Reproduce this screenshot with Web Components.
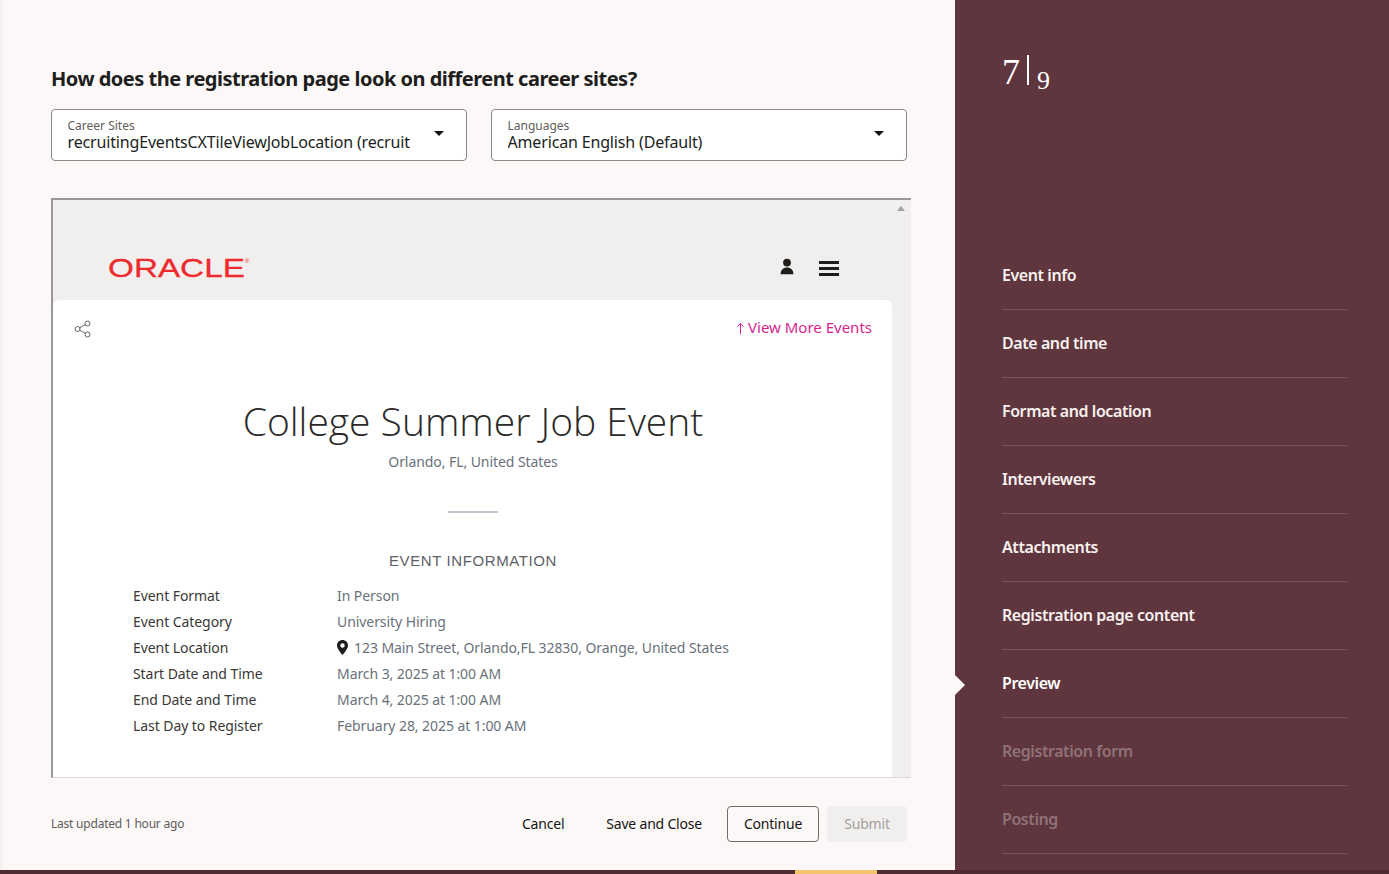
<!DOCTYPE html>
<html lang="en">
<head>
<meta charset="utf-8">
<title>Preview</title>
<style>
    html, body { margin: 0; height: 100%; }
    body { font-family: "Noto Sans", sans-serif; overflow: hidden; background: #4f2c33; }
</style>
</head>
<body>
<wizard-page>
    <select-field slot="selects" label="Career Sites" value="recruitingEventsCXTileViewJobLocation (recruit"></select-field>
    <select-field slot="selects" label="Languages" value="American English (Default)"></select-field>

    <site-preview slot="preview">
        <info-row label="Event Format" value="In Person"></info-row>
        <info-row label="Event Category" value="University Hiring"></info-row>
        <info-row label="Event Location" value="123 Main Street, Orlando,FL 32830, Orange, United States" pin></info-row>
        <info-row label="Start Date and Time" value="March 3, 2025 at 1:00 AM"></info-row>
        <info-row label="End Date and Time" value="March 4, 2025 at 1:00 AM"></info-row>
        <info-row label="Last Day to Register" value="February 28, 2025 at 1:00 AM"></info-row>
    </site-preview>

    <wizard-footer slot="footer"></wizard-footer>

    <wizard-step slot="steps">Event info</wizard-step>
    <wizard-step slot="steps">Date and time</wizard-step>
    <wizard-step slot="steps">Format and location</wizard-step>
    <wizard-step slot="steps">Interviewers</wizard-step>
    <wizard-step slot="steps">Attachments</wizard-step>
    <wizard-step slot="steps">Registration page content</wizard-step>
    <wizard-step slot="steps" current>Preview</wizard-step>
    <wizard-step slot="steps" disabled>Registration form</wizard-step>
    <wizard-step slot="steps" disabled>Posting</wizard-step>
</wizard-page>

<script>
class WizardPage extends HTMLElement {
    constructor() {
        super();
        this.attachShadow({ mode: 'open' });
        this.shadowRoot.innerHTML = `
        <style>
            :host {
                display: block;
                height: 874px;
                position: relative;
                overflow: hidden;
            }
            .main {
                display: flex;
                height: 870px;
            }
            .content {
                box-sizing: border-box;
                width: 955px;
                padding: 0 48px 0 48px;
                background: #fcf8f7;
                border-left: 3px solid #f5f3f1;
                display: flex;
                flex-direction: column;
            }
            h1 {
                margin: 64px 0 0;
                font-size: 20px;
                line-height: 29px;
                font-weight: 700;
                letter-spacing: -.5px;
                color: #201e1c;
                white-space: nowrap;
            }
            .selects {
                display: flex;
                gap: 24px;
                margin-top: 16px;
            }
            .preview {
                margin: 37px -4px 0 0;
            }
            .side {
                flex: 1;
                background: #5f353e;
                color: #fff;
                padding: 0 42px 0 47px;
            }
            .count {
                display: flex;
                align-items: flex-start;
                height: 30px;
                margin-top: 54px;
                font-family: "Liberation Serif", serif;
                color: #fff;
            }
            .count b {
                font-weight: 400;
                font-size: 36px;
                line-height: 36px;
            }
            .count i {
                width: 1.500px;
                height: 30px;
                margin: 1px 8.500px 0 7px;
                background: #fff;
            }
            .count span {
                font-size: 26px;
                line-height: 26px;
                margin-top: 14px;
            }
            .steps {
                margin-top: 158px;
            }
            .strip {
                height: 4px;
                background: #4f2c33;
                position: relative;
            }
            .strip span {
                position: absolute;
                left: 795px;
                top: 0;
                width: 82px;
                height: 4px;
                background: #f5c36c;
            }
        </style>
        <div class="main">
            <section class="content">
                <h1>How does the registration page look on different career sites?</h1>
                <div class="selects"><slot name="selects"></slot></div>
                <div class="preview"><slot name="preview"></slot></div>
                <slot name="footer"></slot>
            </section>
            <aside class="side">
                <div class="count"><b>7</b><i></i><span>9</span></div>
                <nav class="steps"><slot name="steps"></slot></nav>
            </aside>
        </div>
        <div class="strip"><span></span></div>
        `;
    }
}

class SelectField extends HTMLElement {
    constructor() {
        super();
        this.attachShadow({ mode: 'open' });
        this.shadowRoot.innerHTML = `
        <style>
            :host {
                display: flex;
                align-items: center;
                box-sizing: border-box;
                width: 416px;
                height: 52px;
                padding: 0 22px 0 15.500px;
                background: #fff;
                border: 1px solid #8c8986;
                border-radius: 4px;
            }
            .text {
                flex: 1;
                min-width: 0;
                white-space: nowrap;
                overflow: hidden;
            }
            .label {
                font-size: 12px;
                line-height: 14px;
                color: #5f5c59;
                margin-top: 1px;
            }
            .value {
                font-size: 16px;
                line-height: 19px;
                letter-spacing: -.16px;
                color: #201e1c;
            }
            .arrow {
                width: 0;
                height: 0;
                margin-top: -4px;
                border-left: 5px solid transparent;
                border-right: 5px solid transparent;
                border-top: 5px solid #161513;
            }
        </style>
        <div class="text">
            <div class="label"></div>
            <div class="value"></div>
        </div>
        <div class="arrow"></div>
        `;
    }

    connectedCallback() {
        this.shadowRoot.querySelector('.label').textContent = this.getAttribute('label');
        this.shadowRoot.querySelector('.value').textContent = this.getAttribute('value');
    }
}

class SitePreview extends HTMLElement {
    constructor() {
        super();
        this.attachShadow({ mode: 'open' });
        this.shadowRoot.innerHTML = `
        <style>
            :host {
                display: grid;
                grid-template-columns: 1fr 19px;
                box-sizing: border-box;
                height: 580px;
                background: #f1efed;
                border-top: 2px solid #9a9896;
                border-left: 2px solid #9a9896;
                border-bottom: 1px solid #dcdad8;
                position: relative;
            }
            .page {
                display: flex;
                flex-direction: column;
                min-width: 0;
            }
            header {
                display: flex;
                align-items: center;
                height: 100px;
                padding: 36px 53px 0 55px;
                box-sizing: border-box;
            }
            .logo {
                flex: 1;
                font-family: "Liberation Sans", sans-serif;
                font-size: 26px;
                line-height: 26px;
                color: #ee2a2e;
                white-space: nowrap;
                transform-origin: left center;
                transform: scaleX(1.280) scaleY(.97);
                -webkit-text-stroke: .3px #ee2a2e;
            }
            .logo sup {
                font-size: 5px;
                line-height: 0;
                vertical-align: 14px;
                -webkit-text-stroke: 0;
            }
            .user { margin: 0 25px 3px 0; display: block; }
            .burger { display: block; margin-top: 2px; }
            .card {
                flex: 1;
                background: #fff;
                border-radius: 6px 6px 0 0;
                padding: 0 20px 0 21px;
                color: #69717a;
            }
            .tools {
                display: flex;
                justify-content: space-between;
                align-items: center;
                height: 28px;
                font-size: 15px;
                color: #d61f8f;
                margin-top: 14px;
            }
            .tools svg.share { margin-top: 2px; }
            .more { margin-bottom: 2px; }
            .more svg { vertical-align: -1px; margin-right: 3px; }
            h2 {
                margin: 53px 0 0;
                font-family: "Open Sans", sans-serif;
                font-weight: 300;
                font-size: 39px;
                line-height: 52px;
                text-align: center;
                color: #2b2a29;
                white-space: nowrap;
            }
            .where {
                font-size: 14px;
                line-height: 20px;
                letter-spacing: -.07px;
                text-align: center;
                margin-top: 5px;
            }
            hr {
                width: 50px;
                height: 2px;
                border: 0;
                margin: 39px auto 0;
                background: #b9c4cf;
            }
            h3 {
                margin: 38px 0 0;
                font-family: "Liberation Sans", sans-serif;
                font-weight: 400;
                font-size: 15px;
                line-height: 20px;
                letter-spacing: .6px;
                text-align: center;
                color: #5d6166;
            }
            .rows {
                margin: 11px 0 0 59px;
            }
            .bar {
                position: relative;
            }
            .bar::before {
                content: "";
                position: absolute;
                top: 6px;
                left: 5px;
                border-left: 4px solid transparent;
                border-right: 4px solid transparent;
                border-bottom: 5px solid #a3a1a0;
            }
        </style>
        <div class="page">
            <header>
                <div class="logo">ORACLE<sup>®</sup></div>
                <svg class="user" width="14" height="17" viewBox="0 0 14 17">
                    <circle cx="7" cy="4.600" r="3.900" fill="#201e1c"/>
                    <path d="M.6 16.200c0-4.300 2.600-6.700 6.400-6.700s6.400 2.400 6.400 6.700z" fill="#201e1c"/>
                </svg>
                <svg class="burger" width="20" height="16" viewBox="0 0 20 16">
                    <rect y="0" width="20" height="3" fill="#201e1c"/>
                    <rect y="6" width="20" height="3" fill="#201e1c"/>
                    <rect y="12" width="20" height="3" fill="#201e1c"/>
                </svg>
            </header>
            <div class="card">
                <div class="tools">
                    <svg class="share" width="18" height="18" viewBox="0 0 18 18" fill="none" stroke="#5f6368" stroke-width="1">
                        <circle cx="3.500" cy="9" r="2.500"/>
                        <circle cx="13.500" cy="3.500" r="2.500"/>
                        <circle cx="13.500" cy="14.500" r="2.500"/>
                        <path d="M5.700 7.800l5.600-3.100M5.700 10.200l5.600 3.100"/>
                    </svg>
                    <span class="more"><svg width="9" height="12" viewBox="0 0 9 12" fill="none" stroke="#d61f8f" stroke-width="1"><path d="M4.500 12V1.500M1.500 4.500l3-3 3 3"/></svg>View More Events</span>
                </div>
                <h2>College Summer Job Event</h2>
                <div class="where">Orlando, FL, United States</div>
                <hr>
                <h3>EVENT INFORMATION</h3>
                <div class="rows"><slot></slot></div>
            </div>
        </div>
        <div class="bar"></div>
        `;
    }
}

class InfoRow extends HTMLElement {
    constructor() {
        super();
        this.attachShadow({ mode: 'open' });
        this.shadowRoot.innerHTML = `
        <style>
            :host {
                display: grid;
                grid-template-columns: 204px 1fr;
                height: 26px;
                align-items: center;
                font-size: 14px;
                letter-spacing: -.07px;
                white-space: nowrap;
            }
            .label { color: #3a3835; }
            .value { color: #69717a; display: flex; align-items: center; }
            svg { margin-right: 6px; }
        </style>
        <span class="label"></span>
        <span class="value"></span>
        `;
    }

    connectedCallback() {
        const value = this.shadowRoot.querySelector('.value');
        this.shadowRoot.querySelector('.label').textContent = this.getAttribute('label');
        value.textContent = this.getAttribute('value');
        if (this.hasAttribute('pin')) {
            value.insertAdjacentHTML('afterbegin', `
            <svg width="11" height="15" viewBox="0 0 11 15">
                <path fill-rule="evenodd" fill="#201e1c" d="M5.500 0C2.400 0 0 2.400 0 5.400 0 9 5.500 15 5.500 15S11 9 11 5.400C11 2.400 8.600 0 5.500 0zm0 3.300a2.200 2.200 0 1 1 0 4.400 2.200 2.200 0 0 1 0-4.400z"/>
            </svg>`);
        }
    }
}

class WizardFooter extends HTMLElement {
    constructor() {
        super();
        this.attachShadow({ mode: 'open' });
        this.shadowRoot.innerHTML = `
        <style>
            :host {
                display: flex;
                align-items: center;
                margin-top: 28px;
                height: 36px;
                font-size: 14px;
                letter-spacing: -.2px;
                color: #161513;
            }
            .updated {
                flex: 1;
                font-size: 12px;
                letter-spacing: -.22px;
                color: #5f5c59;
                padding-bottom: 1px;
            }
            span.btn {
                display: flex;
                align-items: center;
                justify-content: center;
                box-sizing: border-box;
                height: 36px;
                padding-bottom: 1px;
                white-space: nowrap;
            }
            .cancel { margin-right: 42px; }
            .save { margin-right: 25px; }
            .continue {
                width: 92px;
                border: 1px solid #6f6c69;
                border-radius: 4px;
                margin-right: 8px;
            }
            .submit {
                width: 80px;
                background: #f1efed;
                color: #a3a09d;
                border-radius: 4px;
            }
        </style>
        <span class="updated">Last updated 1 hour ago</span>
        <span class="btn cancel">Cancel</span>
        <span class="btn save">Save and Close</span>
        <span class="btn continue">Continue</span>
        <span class="btn submit">Submit</span>
        `;
    }
}

class WizardStep extends HTMLElement {
    constructor() {
        super();
        this.attachShadow({ mode: 'open' });
        this.shadowRoot.innerHTML = `
        <style>
            :host {
                display: flex;
                align-items: center;
                box-sizing: border-box;
                height: 68px;
                padding-bottom: 1px;
                font-size: 16px;
                font-weight: 600;
                letter-spacing: -.43px;
                color: #f7f1ef;
                border-bottom: 1px solid #77525a;
                position: relative;
            }
            :host([disabled]) { color: #8f7278; }
            :host([current]) { color: #fff; }
            :host([current])::before {
                content: "";
                position: absolute;
                left: -47px;
                top: 25px;
                border-left: 10px solid #fcf8f7;
                border-top: 10px solid transparent;
                border-bottom: 10px solid transparent;
            }
        </style>
        <slot></slot>
        `;
    }
}

customElements.define('wizard-page', WizardPage);
customElements.define('select-field', SelectField);
customElements.define('site-preview', SitePreview);
customElements.define('info-row', InfoRow);
customElements.define('wizard-footer', WizardFooter);
customElements.define('wizard-step', WizardStep);
</script>
</body>
</html>
